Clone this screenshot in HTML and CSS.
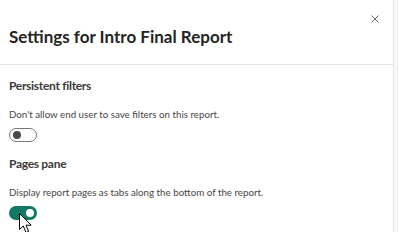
FILE: index.html
```html
<!DOCTYPE html>
<html>
<head>
<meta charset="utf-8">
<link rel="stylesheet" href="styles.css">
</head>
<body>
<div class="page">
  <div class="panel">
    <div class="header">
      <button class="close" aria-label="Close">
        <svg width="8" height="8" viewBox="0 0 8 8"><path d="M0.5 0.5L7.5 7.5M7.5 0.5L0.5 7.5" stroke="#6b6a69" stroke-width="1" fill="none"/></svg>
      </button>
      <h1 class="title">Settings for Intro Final Report</h1>
    </div>
    <div class="body">
      <div class="section">
        <h2 class="heading">Persistent filters</h2>
        <p class="desc">Don't allow end user to save filters on this report.</p>
        <div class="toggle off"><span class="knob"></span></div>
      </div>
      <div class="section second">
        <h2 class="heading">Pages pane</h2>
        <p class="desc">Display report pages as tabs along the bottom of the report.</p>
        <div class="toggle on"><span class="knob"></span>
          <svg class="cursor" width="14" height="21" viewBox="0 0 14 21"><path d="M0.5 0.5L0.5 16.5L4.3 13L7 19.5L9.6 18.4L7 12.2L12.2 12.2Z" fill="#fff" stroke="#000" stroke-width="1" stroke-linejoin="miter"/></svg>
        </div>
      </div>
    </div>
  </div>
  <div class="rail"></div>
</div>
</body>
</html>
```
FILE: styles.css
```css
* { box-sizing: border-box; }
html, body { margin: 0; padding: 0; background: #fff; }
body { font-family: "Lato", "Open Sans", sans-serif; width: 400px; height: 232px; overflow: hidden; }
.page { display: flex; height: 232px; }
.panel { width: 394px; border-right: 1px solid #e3e3e3; display: flex; flex-direction: column; }
.rail { width: 4px; border-right: 1px solid #ececec; background: #fafafa; }
.header { height: 65px; border-bottom: 1px solid #e3e3e3; padding: 0 0 0 9px; position: relative; }
.close { position: absolute; right: 14px; top: 15px; width: 8px; height: 8px; padding: 0; border: 0; background: none; display: block; }
.close svg { display: block; }
.title { margin: 0; padding-top: 26px; font-size: 17px; font-weight: 700; color: #252423; line-height: 22px; }
.body { padding: 0 0 0 9px; }
.section { padding-top: 12px; }
.section.second { padding-top: 13px; }
.heading { margin: 0; font-size: 12px; font-weight: 700; color: #3b3a39; line-height: 18px; letter-spacing: -0.3px; }
.desc { margin: 0; padding-top: 12px; font-size: 9.75px; color: #484644; line-height: 14px; }
.toggle { margin-top: 7px; width: 28px; height: 14px; border-radius: 7px; position: relative; }
.toggle.off { border: 1px solid #7a7978; background: #fff; }
.toggle.on { background: #117865; }
.knob { position: absolute; top: 50%; width: 8px; height: 8px; margin-top: -4px; border-radius: 50%; }
.toggle.off .knob { left: 3px; background: #4a4948; }
.toggle.on .knob { right: 3px; background: #fff; }
.cursor { position: absolute; left: 10px; top: 7px; }
```
